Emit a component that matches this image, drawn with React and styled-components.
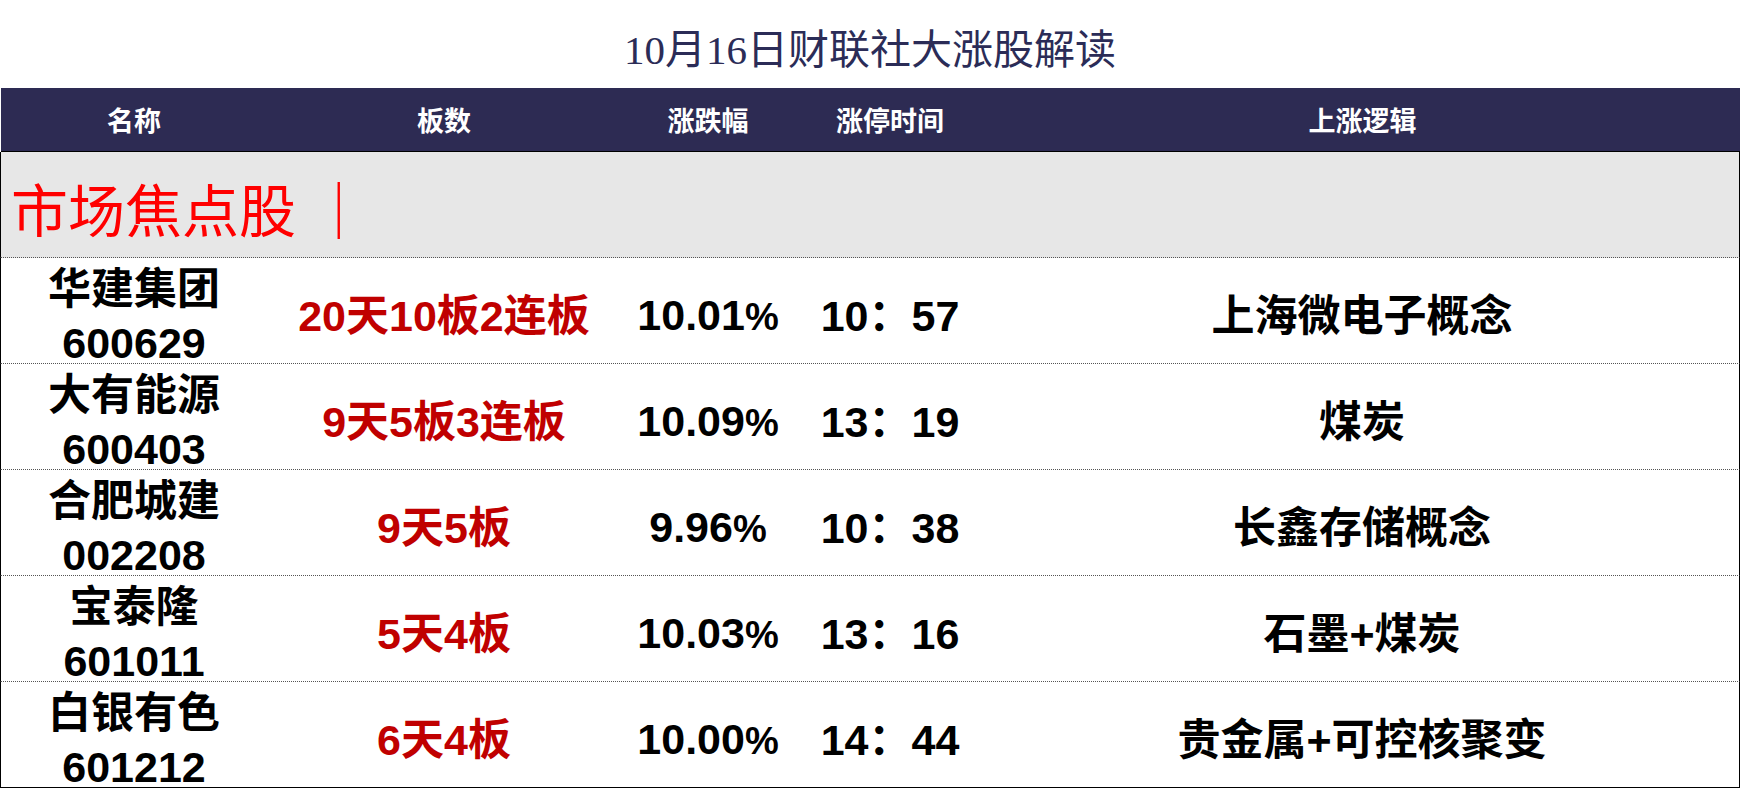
import React from 'react';
import styled, { createGlobalStyle } from 'styled-components';

const GlobalStyle = createGlobalStyle`
  html, body {
    margin: 0;
    padding: 0;
    background: #ffffff;
  }
  body {
    font-family: "Liberation Sans", "Noto Sans CJK SC", sans-serif;
  }
`;

const Page = styled.div`
  width: 1740px;
  height: 788px;
  overflow: hidden;
  background: #ffffff;
`;

const Title = styled.h1`
  margin: 0;
  height: 88px;
  padding-top: 4px;
  box-sizing: border-box;
  display: flex;
  align-items: center;
  justify-content: center;
  font-family: "Liberation Serif", "Noto Sans CJK SC", serif;
  font-weight: 400;
  font-size: 41px;
  color: #2b2c57;
`;

const COLUMNS = '266px 354px 174px 190px 1fr';

const HeaderRow = styled.div`
  display: grid;
  grid-template-columns: ${COLUMNS};
  height: 63px;
  margin-left: 1px;
  background: #2d2b53;
  border-bottom: 1px solid #000000;
`;

const HeaderCell = styled.div`
  display: flex;
  align-items: center;
  justify-content: center;
  color: #ffffff;
  font-size: 27px;
  font-weight: 700;
`;

const SectionRow = styled.div`
  height: 106px;
  box-sizing: border-box;
  display: flex;
  align-items: center;
  padding: 4px 0 0 10px;
  background: #e7e7e7;
  border-left: 1px solid #000000;
  border-right: 1px solid #000000;
  border-bottom: 1px dotted #555555;
`;

const SectionTitle = styled.span`
  font-family: "Liberation Serif", "Noto Sans CJK SC", serif;
  font-size: 57px;
  color: #ff0000;
  white-space: pre;
`;

const DataRow = styled.div`
  display: grid;
  grid-template-columns: ${COLUMNS};
  height: 106px;
  box-sizing: border-box;
  border-left: 1px solid #000000;
  border-right: 1px solid #000000;
  border-bottom: ${p => (p.$last ? '1px solid #000000' : '1px dotted #555555')};
`;

const Cell = styled.div`
  display: flex;
  flex-direction: column;
  align-items: center;
  justify-content: center;
  padding-top: 4px;
  font-size: 43px;
  font-weight: 700;
  line-height: ${p => (p.$stacked ? '54px' : '50px')};
  white-space: nowrap;
  color: ${p => (p.$red ? '#c00000' : '#000000')};
`;

const Pct = styled.span`
  font-size: 38px;
`;

const headers = ['名称', '板数', '涨跌幅', '涨停时间', '上涨逻辑'];

const stocks = [
  { name: '华建集团', code: '600629', boards: '20天10板2连板', change: '10.01', time: '10：57', reason: '上海微电子概念' },
  { name: '大有能源', code: '600403', boards: '9天5板3连板', change: '10.09', time: '13：19', reason: '煤炭' },
  { name: '合肥城建', code: '002208', boards: '9天5板', change: '9.96', time: '10：38', reason: '长鑫存储概念' },
  { name: '宝泰隆', code: '601011', boards: '5天4板', change: '10.03', time: '13：16', reason: '石墨+煤炭' },
  { name: '白银有色', code: '601212', boards: '6天4板', change: '10.00', time: '14：44', reason: '贵金属+可控核聚变' },
];

export default function App() {
  return (
    <Page>
      <GlobalStyle />
      <Title>10月16日财联社大涨股解读</Title>
      <HeaderRow>
        {headers.map(h => (
          <HeaderCell key={h}>{h}</HeaderCell>
        ))}
      </HeaderRow>
      <SectionRow>
        <SectionTitle>市场焦点股 ｜</SectionTitle>
      </SectionRow>
      {stocks.map((s, i) => (
        <DataRow key={s.code} $last={i === stocks.length - 1}>
          <Cell $stacked>
            <span>{s.name}</span>
            <span>{s.code}</span>
          </Cell>
          <Cell $red>{s.boards}</Cell>
          <Cell>
            <span>
              {s.change}
              <Pct>%</Pct>
            </span>
          </Cell>
          <Cell>{s.time}</Cell>
          <Cell>{s.reason}</Cell>
        </DataRow>
      ))}
    </Page>
  );
}
